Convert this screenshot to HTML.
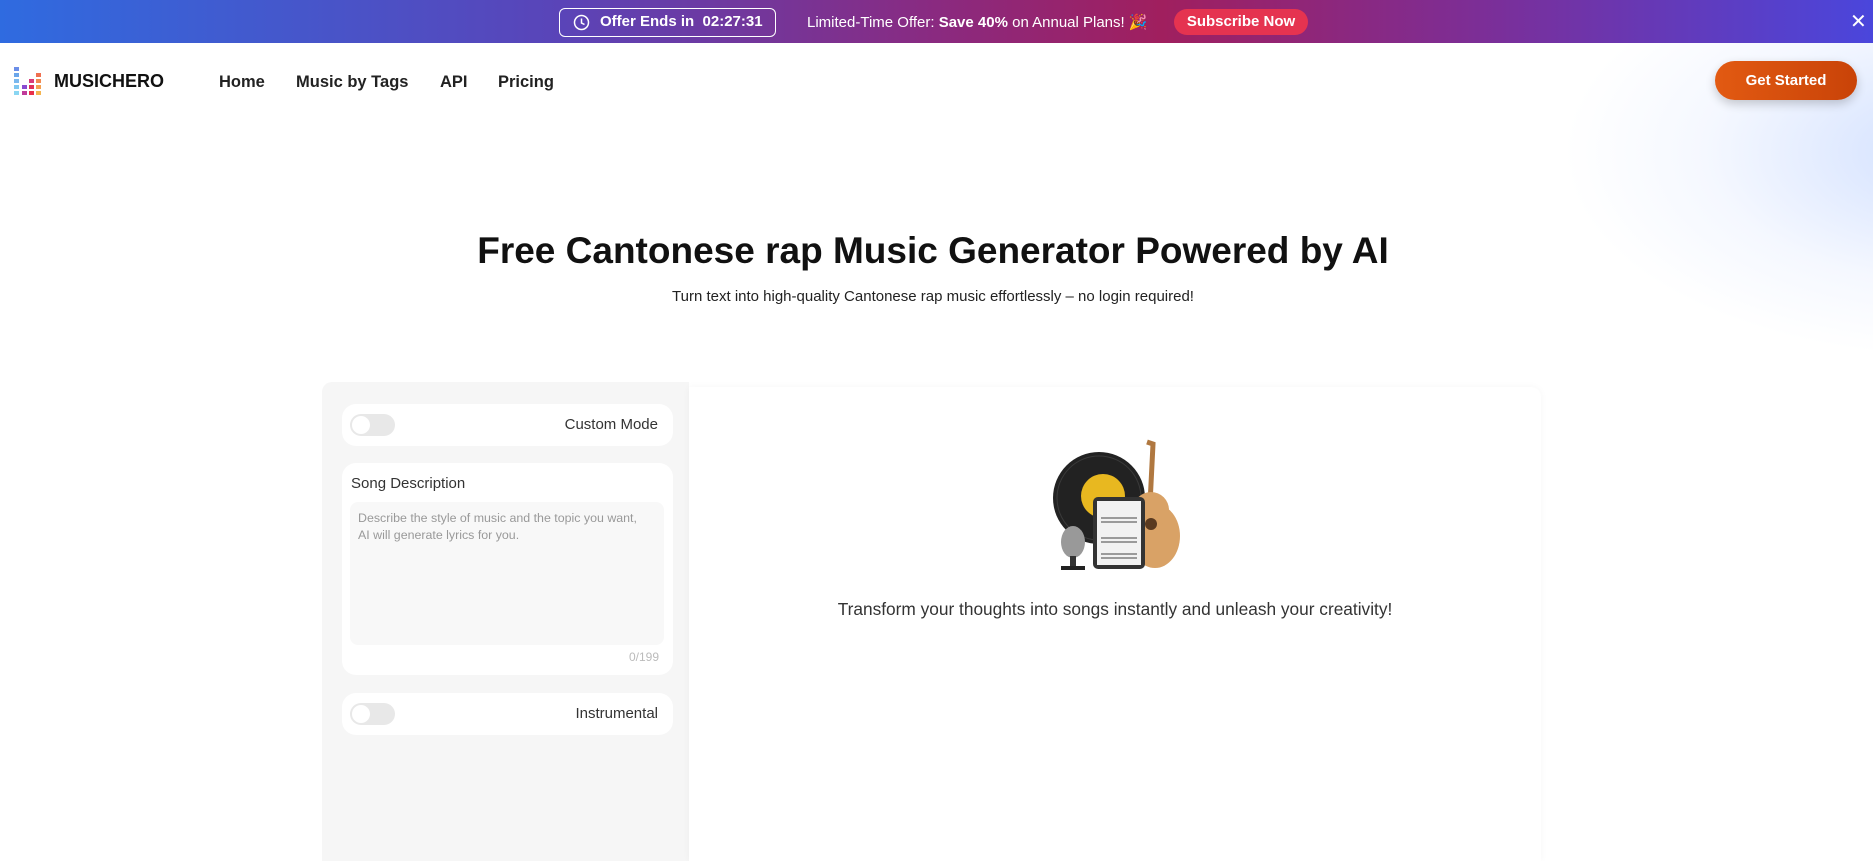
<!DOCTYPE html>
<html><head><meta charset="utf-8"><style>
*{box-sizing:border-box;margin:0;padding:0}
body{width:1873px;height:861px;overflow:hidden;font-family:"Liberation Sans",sans-serif;background:#fff;position:relative;color:#111}
.banner{position:absolute;left:0;top:0;width:1873px;height:43px;background:linear-gradient(90deg,#2f6be0 0%,#5a44b8 30%,#8a2a80 50%,#a01f5e 62%,#7a2f9a 80%,#4a46dc 100%);color:#fff}
.offer{position:absolute;left:559px;top:8px;width:217px;height:29px;border:1.5px solid #fff;border-radius:6px;font-weight:bold;font-size:15px;line-height:26px;padding-left:40px}
.offer svg{position:absolute;left:13px;top:5px}
.lim{position:absolute;left:807px;top:13px;font-size:15px}
.sub{position:absolute;left:1174px;top:9px;width:134px;height:26px;border-radius:13px;background:#e53350;font-weight:bold;font-size:15px;text-align:center;line-height:26px}
.x{position:absolute;left:1850px;top:9px;font-size:20px}
.glow{position:absolute;left:1560px;top:40px;width:500px;height:320px;background:radial-gradient(ellipse at 80% 35%,rgba(160,190,255,.5),rgba(205,220,255,.2) 45%,rgba(255,255,255,0) 70%)}
.logo{position:absolute;left:14px;top:67px}
.brand{position:absolute;left:54px;top:71px;font-weight:bold;font-size:18px}
.nav{position:absolute;top:73px;font-size:16.5px;font-weight:bold;color:#222}
.gs{position:absolute;left:1715px;top:61px;width:142px;height:39px;border-radius:20px;background:linear-gradient(90deg,#e25a12,#c94308);color:#fff;font-weight:bold;font-size:15px;text-align:center;line-height:39px;box-shadow:0 4px 10px rgba(0,0,0,.2)}
h1{position:absolute;left:0;width:1866px;top:230px;text-align:center;font-size:37px;font-weight:bold}
.st{position:absolute;left:0;width:1866px;top:288px;text-align:center;font-size:15px;color:#222}
.lp{position:absolute;left:322px;top:382px;width:367px;height:479px;background:#f6f6f6;border-radius:10px 0 0 0}
.rp{position:absolute;left:689px;top:387px;width:852px;height:474px;background:#fff;border-radius:0 10px 0 0;box-shadow:0 0 8px rgba(0,0,0,.04)}
.card{position:absolute;left:342px;width:331px;background:#fff;border-radius:14px}
.tog{position:absolute;left:8px;width:45px;height:22px;border-radius:11px;background:#e8e8e8}
.tog::after{content:"";position:absolute;left:2px;top:2px;width:18px;height:18px;border-radius:50%;background:#fff}
.lbl{position:absolute;right:15px;font-size:15px;color:#333}
.ta{position:absolute;left:8px;top:39px;width:314px;height:143px;background:#f8f8f8;border-radius:8px;padding:8px 6px 8px 8px;font-size:12.4px;line-height:17px;color:#999}
.rt{position:absolute;left:689px;width:852px;top:599px;text-align:center;font-size:17.3px;color:#333}
</style></head><body>
<div class="glow"></div>
<div class="banner">
 <div class="offer"><svg width="17" height="17" viewBox="0 0 17 17"><circle cx="8.5" cy="8.5" r="7" fill="none" stroke="#fff" stroke-width="1.5"/><path d="M8.5 4.5V9l3 1.5" fill="none" stroke="#fff" stroke-width="1.5"/></svg>Offer Ends in&nbsp;&nbsp;02:27:31</div>
 <div class="lim">Limited-Time Offer: <b>Save 40%</b> on Annual Plans! 🎉</div>
 <div class="sub">Subscribe Now</div>
 <div class="x">✕</div>
</div>
<svg class="logo" width="32" height="30" viewBox="0 0 32 30">
<g>
<rect x="0" y="0" width="5" height="4" fill="#6b8ee8"/><rect x="0" y="6" width="5" height="4" fill="#6ba6ea"/><rect x="0" y="12" width="5" height="4" fill="#7ab8ee"/><rect x="0" y="18" width="5" height="4" fill="#7fc7f0"/><rect x="0" y="24" width="5" height="4" fill="#8ad6f2"/>
<rect x="8" y="18" width="5" height="4" fill="#8a4ad0"/><rect x="8" y="24" width="5" height="4" fill="#c03a9a"/>
<rect x="15" y="12" width="5" height="4" fill="#d83a7a"/><rect x="15" y="18" width="5" height="4" fill="#e0305a"/><rect x="15" y="24" width="5" height="4" fill="#e8304a"/>
<rect x="22" y="6" width="5" height="4" fill="#f07050"/><rect x="22" y="12" width="5" height="4" fill="#f28a50"/><rect x="22" y="18" width="5" height="4" fill="#f4a050"/><rect x="22" y="24" width="5" height="4" fill="#f5b550"/>
</g></svg>
<div class="brand">MUSICHERO</div>
<div class="nav" style="left:219px">Home</div>
<div class="nav" style="left:296px">Music by Tags</div>
<div class="nav" style="left:440px">API</div>
<div class="nav" style="left:498px">Pricing</div>
<div class="gs">Get Started</div>
<h1>Free Cantonese rap Music Generator Powered by AI</h1>
<div class="st">Turn text into high-quality Cantonese rap music effortlessly – no login required!</div>
<div class="lp"></div>
<div class="rp"></div>
<div class="card" style="top:404px;height:42px"><div class="tog" style="top:10px"></div><div class="lbl" style="top:12px">Custom Mode</div></div>
<div class="card" style="top:463px;height:212px">
 <div style="position:absolute;left:9px;top:12px;font-size:15px;color:#333">Song Description</div>
 <div class="ta">Describe the style of music and the topic you want,<br>AI will generate lyrics for you.</div>
 <div style="position:absolute;right:14px;top:187px;font-size:12px;color:#bbb">0/199</div>
</div>
<div class="card" style="top:693px;height:42px"><div class="tog" style="top:10px"></div><div class="lbl" style="top:12px">Instrumental</div></div>
<svg style="position:absolute;left:1051px;top:438px" width="135" height="136" viewBox="0 0 135 136">
<circle cx="48" cy="60" r="46" fill="#222"/><circle cx="48" cy="60" r="42" fill="none" stroke="#3a3a3a" stroke-width="1"/><circle cx="52" cy="58" r="22" fill="#e8b820"/>
<path d="M96 4l6 2-3 60" stroke="#b07840" stroke-width="5" fill="none"/>
<ellipse cx="104" cy="98" rx="25" ry="32" fill="#d9a266"/><ellipse cx="100" cy="72" rx="18" ry="18" fill="#d9a266"/><circle cx="100" cy="86" r="6" fill="#5a3a20"/>
<rect x="42" y="59" width="52" height="72" rx="5" fill="#333"/><rect x="46" y="63" width="44" height="64" fill="#f2f2f2"/>
<g stroke="#444" stroke-width="1"><path d="M50 80h36M50 84h36M50 100h36M50 104h36M50 116h36M50 120h36"/></g>
<ellipse cx="22" cy="104" rx="12" ry="16" fill="#999"/><rect x="19" y="118" width="6" height="10" fill="#333"/><rect x="10" y="128" width="24" height="4" fill="#222"/>
</svg>
<div class="rt">Transform your thoughts into songs instantly and unleash your creativity!</div>
</body></html>
